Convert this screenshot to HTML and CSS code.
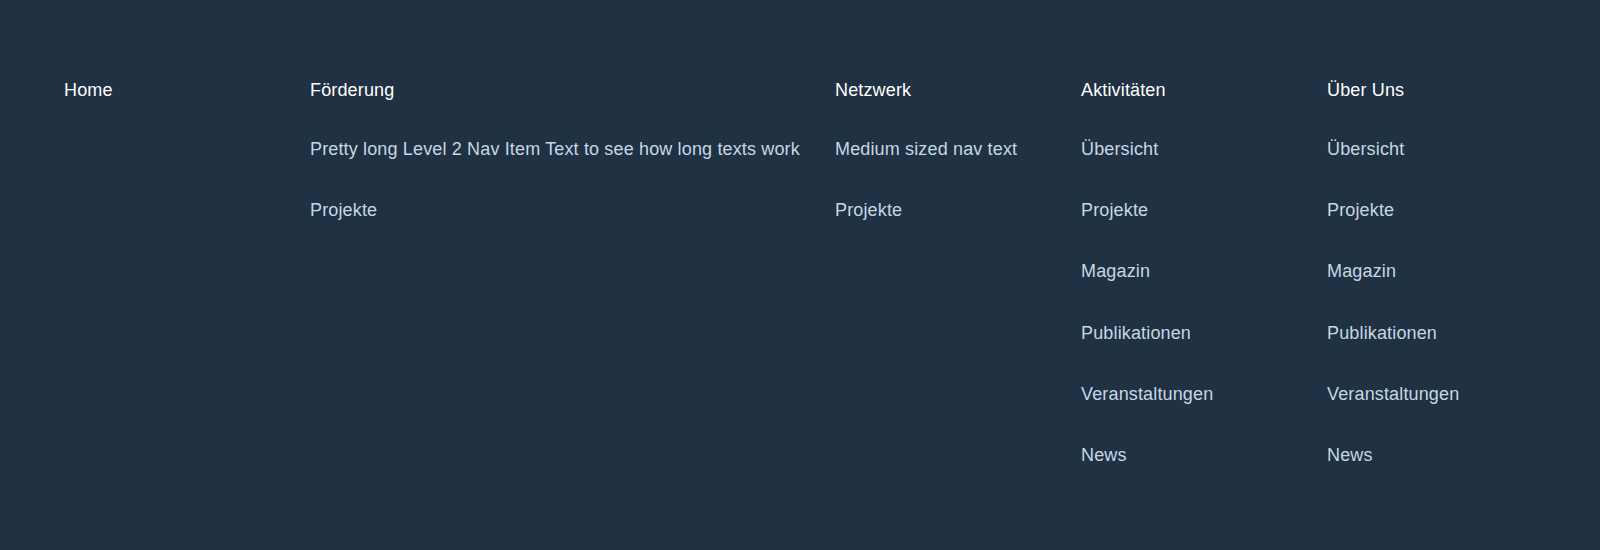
FILE: index.html
```html
<!DOCTYPE html>
<html lang="de">
<head>
<meta charset="utf-8">
<title>Navigation</title>
<link rel="stylesheet" href="styles.css">
</head>
<body>
<nav class="nav">
  <ul class="nav-list">
    <li class="nav-col">
      <a class="nav-head" href="#">Home</a>
    </li>
    <li class="nav-col">
      <a class="nav-head" href="#">Förderung</a>
      <ul class="sub-list">
        <li><a class="sub-link" href="#">Pretty long Level 2 Nav Item Text to see how long texts work</a></li>
        <li><a class="sub-link" href="#">Projekte</a></li>
      </ul>
    </li>
    <li class="nav-col">
      <a class="nav-head" href="#">Netzwerk</a>
      <ul class="sub-list">
        <li><a class="sub-link" href="#">Medium sized nav text</a></li>
        <li><a class="sub-link" href="#">Projekte</a></li>
      </ul>
    </li>
    <li class="nav-col">
      <a class="nav-head" href="#">Aktivitäten</a>
      <ul class="sub-list">
        <li><a class="sub-link" href="#">Übersicht</a></li>
        <li><a class="sub-link" href="#">Projekte</a></li>
        <li><a class="sub-link" href="#">Magazin</a></li>
        <li><a class="sub-link" href="#">Publikationen</a></li>
        <li><a class="sub-link" href="#">Veranstaltungen</a></li>
        <li><a class="sub-link" href="#">News</a></li>
      </ul>
    </li>
    <li class="nav-col">
      <a class="nav-head" href="#">Über Uns</a>
      <ul class="sub-list">
        <li><a class="sub-link" href="#">Übersicht</a></li>
        <li><a class="sub-link" href="#">Projekte</a></li>
        <li><a class="sub-link" href="#">Magazin</a></li>
        <li><a class="sub-link" href="#">Publikationen</a></li>
        <li><a class="sub-link" href="#">Veranstaltungen</a></li>
        <li><a class="sub-link" href="#">News</a></li>
      </ul>
    </li>
  </ul>
</nav>
</body>
</html>
```

FILE: styles.css
```css
html, body {
  margin: 0;
  padding: 0;
  background: #1f3142;
  height: 100%;
}

body {
  font-family: "Liberation Sans", Arial, sans-serif;
  font-size: 18px;
  letter-spacing: 0.15px;
}

.nav {
  padding: 78px 64px 0 64px;
}

.nav-list {
  list-style: none;
  margin: 0;
  padding: 0;
  display: flex;
  gap: 37px;
  align-items: flex-start;
}

.nav-col {
  min-width: 209px;
  display: flex;
  flex-direction: column;
}

.nav-head {
  display: block;
  color: #ffffff;
  text-decoration: none;
  line-height: 24px;
  white-space: nowrap;
}

.sub-list {
  list-style: none;
  margin: 17px 0 0 0;
  padding: 0;
}

.sub-link {
  display: block;
  padding: 18px 0;
  line-height: 25.2px;
  color: #c6d7e4;
  text-decoration: none;
  white-space: nowrap;
}
```
